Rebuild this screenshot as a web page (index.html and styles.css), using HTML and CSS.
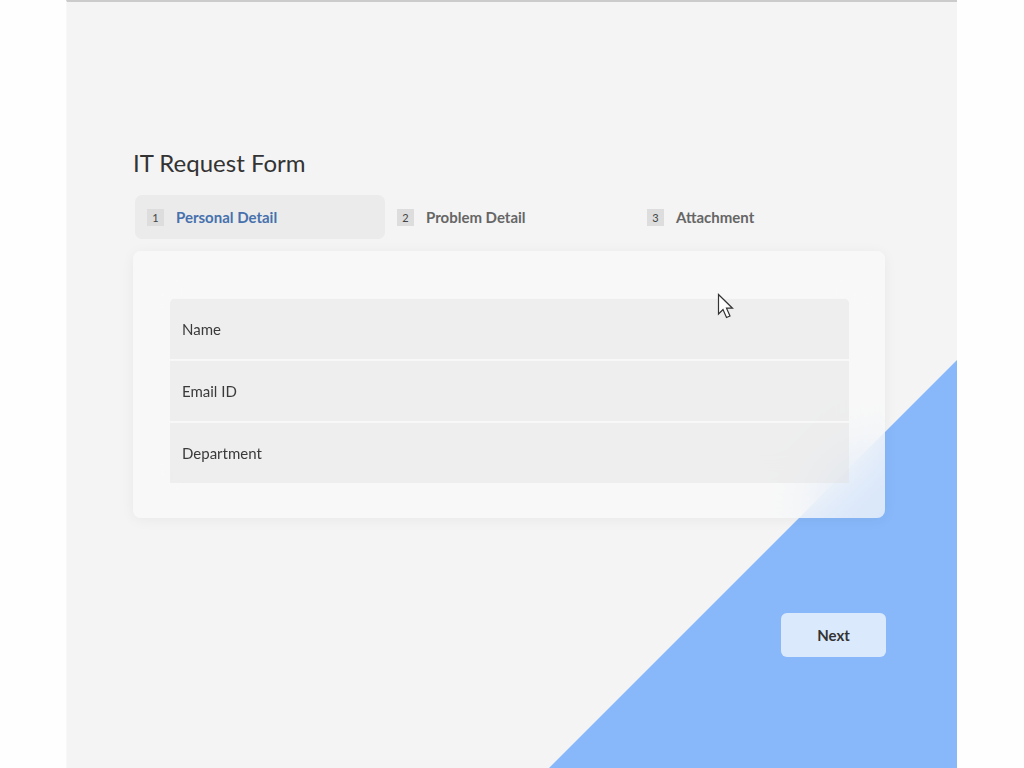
FILE: index.html
```html
<!DOCTYPE html>
<html lang="en">
<head>
<meta charset="utf-8">
<title>IT Request Form</title>
<link rel="stylesheet" href="styles.css">
</head>
<body>
<div class="stage">
  <div class="triangle"></div>
  <main class="content">
    <h1 class="title">IT Request Form</h1>
    <nav class="steps">
      <div class="step active"><span class="num">1</span><span class="label">Personal Detail</span></div>
      <div class="step"><span class="num">2</span><span class="label">Problem Detail</span></div>
      <div class="step"><span class="num">3</span><span class="label">Attachment</span></div>
    </nav>
    <section class="card">
      <div class="fields">
        <div class="field">Name</div>
        <div class="field">Email ID</div>
        <div class="field">Department</div>
      </div>
    </section>
    <div class="actions">
      <button class="next">Next</button>
    </div>
  </main>
  <svg class="cursor" width="20" height="28" viewBox="0 0 20 28" aria-hidden="true">
    <path d="M1.5 1.5 L1.5 21 L6 16.5 L9.5 24.5 L13 23 L9.5 15.2 L15.5 15.2 Z" fill="#fff" stroke="#333" stroke-width="1.2" stroke-linejoin="miter"/>
  </svg>
</div>
</body>
</html>
```
FILE: styles.css
```css
* { box-sizing: border-box; }
html, body { margin: 0; padding: 0; }
body {
  background: #fefefe;
  font-family: "Lato", "Liberation Sans", sans-serif;
  color: #333;
}
.stage {
  position: relative;
  margin-left: 66px;
  width: 891px;
  height: 768px;
  background: #f4f4f4;
  border-top: 2px solid #cbcbcb;
  border-left: 1px solid #f8f8f8;
  overflow: hidden;
}
.triangle {
  position: absolute;
  left: 0; top: 0; right: 0; bottom: 0;
  background: #88b8fa;
  clip-path: polygon(890px 358px, 890px 766px, 482px 766px);
}
.content {
  position: relative;
  width: 752px;
  margin-left: 66px;
  padding-top: 145px;
}
.title {
  margin: 0 0 16px 0;
  font-size: 24px;
  line-height: 32px;
  font-weight: 400;
  color: #333;
}
.steps {
  display: grid;
  grid-template-columns: 250px 250px 250px;
  margin-left: 2px;
  height: 44px;
}
.step {
  display: flex;
  align-items: center;
  padding-left: 12px;
  border-radius: 7px;
}
.step.active { background: #ebebeb; }
.num {
  width: 17px;
  height: 17px;
  display: inline-flex;
  align-items: center;
  justify-content: center;
  background: #dddddd;
  font-size: 11px;
  font-weight: 400;
  color: #444;
  margin-right: 12px;
}
.label {
  font-size: 15px;
  font-weight: 700;
  color: #666;
}
.step.active .label { color: #4671ad; }
.card {
  margin-top: 12px;
  height: 267px;
  padding: 47px 36px 0 37px;
  background: rgba(249, 249, 249, 0.72);
  backdrop-filter: blur(26px);
  -webkit-backdrop-filter: blur(26px);
  border-radius: 8px;
  box-shadow: 0 2px 14px rgba(0, 0, 0, 0.05);
}
.fields {
  display: flex;
  flex-direction: column;
  gap: 1px;
  border-radius: 6px 6px 0 0;
  overflow: hidden;
}
.field {
  height: 61px;
  padding-left: 12px;
  display: flex;
  align-items: center;
  font-size: 15px;
  color: #3a3a3a;
  background: rgba(225, 225, 225, 0.45);
  box-shadow: inset 0 1px 0 rgba(255,255,255,0.5);
}
.actions {
  display: flex;
  justify-content: flex-end;
  margin-top: 95px;
  margin-right: -1px;
}
.next {
  width: 105px;
  height: 44px;
  border: none;
  border-radius: 6px;
  background: #dbe9fc;
  font-family: inherit;
  font-size: 15px;
  font-weight: 700;
  color: #333;
}
.cursor {
  position: absolute;
  left: 650px;
  top: 291px;
}
```
